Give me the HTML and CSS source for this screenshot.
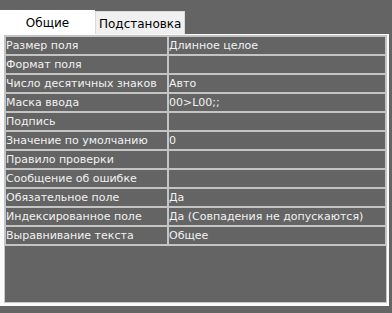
FILE: index.html
```html
<!DOCTYPE html>
<html lang="ru">
<head>
  <meta charset="UTF-8">
  <title>Свойства поля</title>
  <link rel="stylesheet" href="styles.css">
</head>
<body>
  <div class="tabs">
    <div class="tab active">Общие</div>
    <div class="tab">Подстановка</div>
  </div>

  <div class="panel">
    <div class="grid">
      <div class="cell">Размер поля</div><div class="cell">Длинное целое</div>
      <div class="cell">Формат поля</div><div class="cell"></div>
      <div class="cell">Число десятичных знаков</div><div class="cell">Авто</div>
      <div class="cell">Маска ввода</div><div class="cell">00&gt;L00;;</div>
      <div class="cell">Подпись</div><div class="cell"></div>
      <div class="cell">Значение по умолчанию</div><div class="cell">0</div>
      <div class="cell">Правило проверки</div><div class="cell"></div>
      <div class="cell">Сообщение об ошибке</div><div class="cell"></div>
      <div class="cell">Обязательное поле</div><div class="cell">Да</div>
      <div class="cell">Индексированное поле</div><div class="cell">Да (Совпадения не допускаются)</div>
      <div class="cell">Выравнивание текста</div><div class="cell">Общее</div>
    </div>
  </div>
</body>
</html>
```

FILE: styles.css
```css
body {
  margin: 0;
  background-color: #646464;
  font-family: 'DejaVu Sans', Verdana, sans-serif;
  font-size: 11px;
  width: 392px;
  height: 313px;
}

.tabs {
  display: flex;
  align-items: flex-end;
  padding-top: 10px;
}

.tab {
  height: 22px;
  line-height: 24px;
  padding: 0 3px;
  background-color: #f0f0f0;
  border: 1px solid #d9d9d9;
  border-bottom: none;
  color: #000;
  font-size: 12px;
}

.tab.active {
  width: 95px;
  height: 24px;
  line-height: 26px;
  padding: 0;
  box-sizing: border-box;
  background-color: #fff;
  border: none;
  text-align: center;
}

.panel {
  width: 389px;
  height: 272px;
  box-sizing: border-box;
  border-style: solid;
  border-color: #fafafa;
  border-width: 1px 2px 3px 4px;
  box-shadow: inset 0 0 0 1px #c8c8c8;
}

.grid {
  display: grid;
  grid-template-columns: 161px 216px;
  grid-auto-rows: 17px;
  gap: 2px;
  padding: 2px;
  background-color: #c4c4c4;
}

.cell {
  background-color: #646464;
  color: #f2f2f2;
  line-height: 18px;
  white-space: nowrap;
  overflow: hidden;
}
```
